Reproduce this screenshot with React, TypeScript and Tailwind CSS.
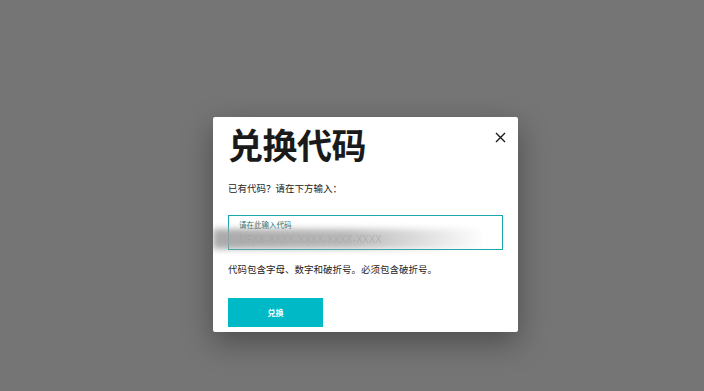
export default function App() {
  return (
    <div
      className="min-h-screen w-full bg-[#757575] pl-[213px] pt-[117px]"
      style={{ fontFamily: '"Noto Sans", "Noto Sans CJK SC", sans-serif' }}
    >
      <div className="relative h-[215px] w-[305px] overflow-hidden rounded-[2px] bg-white pl-[15px] pr-[15px] pt-[8px] shadow-[0_10px_30px_rgba(0,0,0,0.35)]">
        <button
          type="button"
          className="absolute right-[12px] top-[14px] flex h-[12px] w-[12px] items-center justify-center text-[#1a1a1a]"
        >
          <svg width="11" height="11" viewBox="0 0 11 11" fill="none">
            <path d="M1 1L10 10M10 1L1 10" stroke="currentColor" strokeWidth="1.4" />
          </svg>
        </button>
        <h1 className="text-[35px] font-bold leading-[42px] tracking-[-0.5px] text-[#1a1a1a]">
          兑换代码
        </h1>
        <p className="mt-[15px] text-[9.5px] leading-[14px] text-[#222]">
          已有代码？请在下方输入：
        </p>
        <div className="mt-[19px] flex h-[35px] w-[275px] flex-col border border-[#1aa6ad] pl-[10px] pt-[4px]">
          <span className="text-[7.5px] leading-[10px] text-[#1b6f6f]">请在此输入代码</span>
          <span className="mt-[2px] text-[10px] leading-[14px] tracking-[0.5px] text-[#c4c4c4]">
            UFXX-XXXX-XXXX-XXXX-XXXX
          </span>
        </div>
        <div className="pointer-events-none absolute left-0 top-[112px] h-[20px] w-[272px] bg-gradient-to-r from-[rgba(160,160,160,0.9)] via-[rgba(168,168,168,0.8)] to-transparent blur-[3px]" />
        <p className="mt-[13px] text-[9.5px] leading-[14px] text-[#222]">
          代码包含字母、数字和破折号。必须包含破折号。
        </p>
        <button
          type="button"
          className="mt-[21px] flex h-[29px] w-[95px] items-center justify-center bg-[#00b9c7] text-[8px] font-bold text-white"
        >
          兑换
        </button>
      </div>
    </div>
  );
}
